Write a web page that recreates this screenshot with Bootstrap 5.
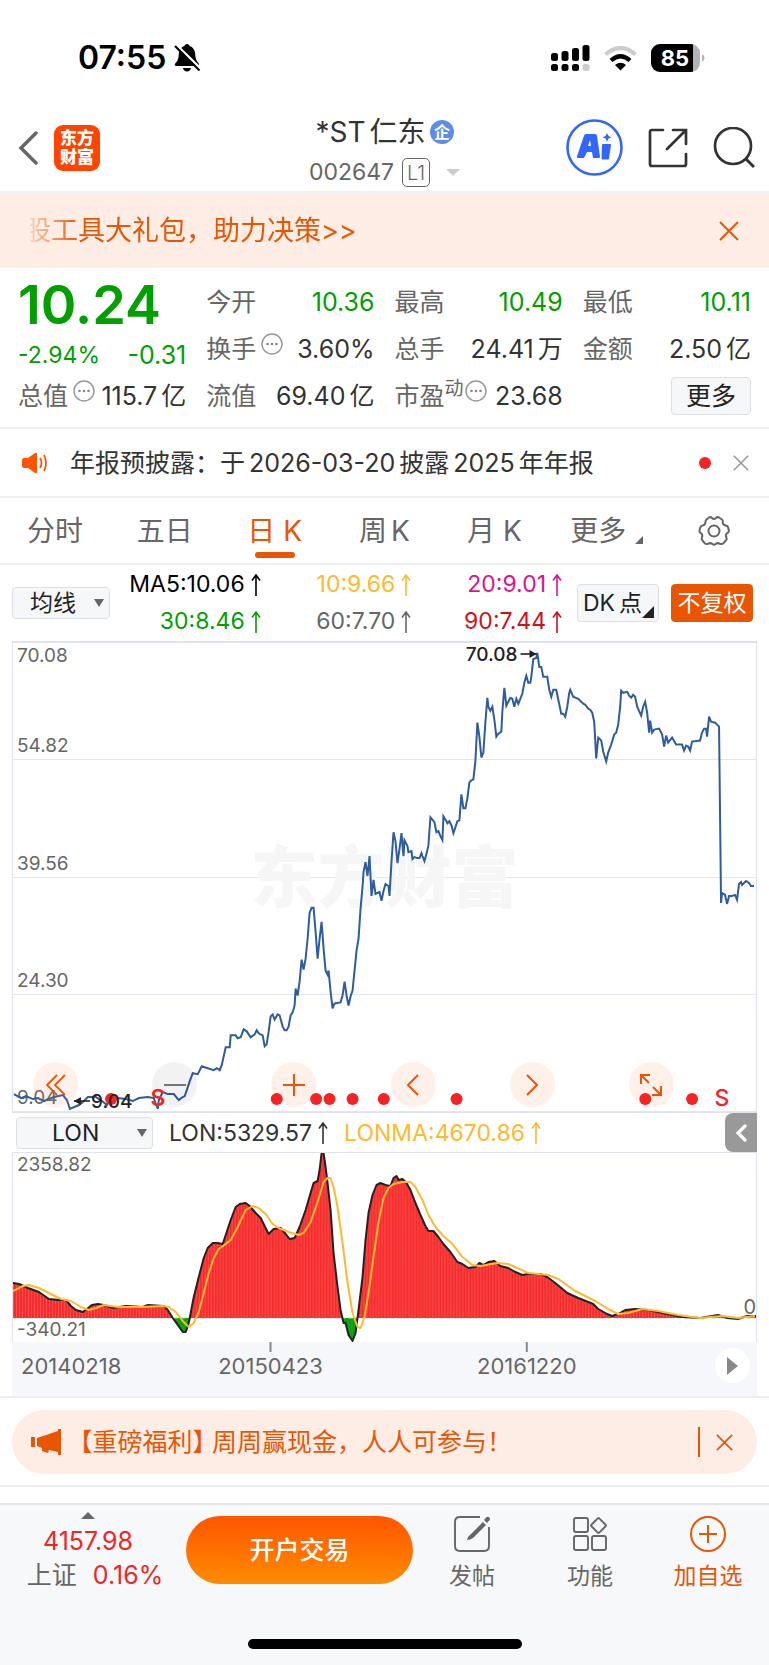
<!DOCTYPE html>
<html lang="zh-CN">
<head>
<meta charset="utf-8">
<meta name="viewport" content="width=device-width, initial-scale=1">
<title>*ST仁东 002647</title>
<link href="https://cdn.jsdelivr.net/npm/bootstrap@5.3.0/dist/css/bootstrap.min.css" rel="stylesheet">
<style>
:root{--brand:#ea5504;--up:#f52323;--down:#00a000;--ink:#333;--muted:#666;--rule:#eff0f3;--panel:#f7f8fa;--tint:#fdede4;--amber:#ffb92e}
body{font-family:Inter,"Noto Sans CJK SC",sans-serif;font-size:25px;line-height:32px;color:var(--ink);background:#fff}
svg{display:block;flex:none}
button,a{color:inherit;text-decoration:none}
.bare{border:0;background:none;padding:0;color:inherit;font:inherit}
.rule-b{border-bottom:2px solid var(--rule)}
.status{height:112px;padding:4px 64px 0 78px;color:#000}
.clock{font-size:32px;font-weight:600}
.signals{gap:14px}
.topbar{display:grid;grid-template-columns:1fr auto 1fr;height:81px;padding:0 14px}
.topbar .side{padding-bottom:8px}
.logo{width:46px;height:46px;border-radius:9px;background:#ff4400;color:#fff;font-size:17px;line-height:19px;font-weight:900}
.heading{padding-top:4px}
.stock{font-size:28px;line-height:32px;margin:0 0 8px;font-weight:400}
.code{font-size:23px;line-height:32px;color:var(--muted)}
.level{width:28px;height:29px;border:1px solid var(--muted);border-radius:5px;font-size:20px;line-height:28px;font-weight:300}
.caret{width:0;height:0;border:7px solid transparent;border-bottom-width:0;border-top-color:#ccc}
.promo{height:75px;background:var(--tint);color:var(--brand);font-size:27px;padding:0 30px 0 24px}
.ticker{white-space:nowrap;-webkit-mask-image:linear-gradient(90deg,transparent 6px,rgba(0,0,0,.2) 7px,#000 56px);mask-image:linear-gradient(90deg,transparent 6px,rgba(0,0,0,.2) 7px,#000 56px)}
.quote{display:grid;grid-template-columns:repeat(4,1fr);column-gap:20px;padding:10px 18px 8px}
.cell{display:flex;justify-content:space-between;align-items:center;height:47px;white-space:nowrap}
.cell dt{font-weight:400;color:var(--muted);display:flex;align-items:center}
.cell dd{margin:0}
.cell dt svg{margin:0 0 10px 5px}
.cell sup{font-size:19px;top:-7px}
.cell sup + svg{margin-left:1px!important}
.price{font-size:54px;line-height:54px;font-weight:600}
.change{height:40px;padding-top:5px}
.percent{font-size:23px}
.down{color:var(--down)}
.chip{border:1px solid #dcdfe5;border-radius:4px;background:#f6f7f9;color:#222;padding:0}
.chip-lg{width:80px;height:38px;line-height:36px}
.notice{height:69px;padding:0 20px 0 22px;gap:22px}
.tabs{display:grid;grid-template-columns:repeat(7,1fr);height:67px;color:var(--muted);font-size:28px}
.tabs button{position:relative}
.tabs .active{color:var(--brand)}
.tabs .active::after{content:"";position:absolute;left:50%;bottom:5px;width:40px;margin-left:-20px;height:6px;border-radius:3px;background:var(--brand)}
.corner{display:inline-block;width:0;height:0;border:4px solid;border-top-color:transparent;border-left-color:transparent}
.tabs .corner{position:absolute;right:16px;bottom:19px}
.tabs .with-corner{padding-right:12px}
.tools{height:76px;padding:0 17px 0 12px;font-size:22px}
.pick{position:relative}
.pick select{appearance:none;border:1px solid #dcdfe5;border-radius:4px;background:#f6f7f9;color:#222;height:32px;line-height:28px;font-size:23px;padding:0 0 0 17px}
.pick::after{content:"";position:absolute;right:6px;top:12px;border:5px solid transparent;border-bottom-width:0;border-top:8px solid var(--muted)}
.pick-ma select{width:98px}
.pick-sub select{width:137px;padding-left:35px}
.avgs{display:grid;grid-template-columns:repeat(3,1fr);width:452px;font-size:23px;line-height:37px;margin-right:15px}
.avgs span,.val{display:flex;align-items:center;justify-content:flex-end;gap:6px}
.dk{position:relative;width:82px;text-align:left;padding-left:5px;font-size:23px}
.dk .corner{position:absolute;right:4px;bottom:3px;border-width:6px}
.adj{background:var(--brand);border-color:var(--brand);color:#fff;width:82px;font-size:23px;margin-left:12px}
.frame{margin:0 12px;border:1px solid #dfe2e8;border-width:2px 1px 1px}
.plot{position:relative;height:472px}
.band{height:25%;border-bottom:1px solid #e3e6ee;padding-left:4px;display:flex;flex-direction:column;justify-content:flex-end;font-size:19px;line-height:26px;color:var(--muted)}
.band:first-child{justify-content:space-between}
.band:last-of-type{border-bottom:0}
.layer{position:absolute;inset:0;width:100%;height:100%}
.water{position:absolute;inset:0;display:flex;align-items:center;justify-content:center;font-size:67px;font-weight:900;color:#f6f6f6}
.pads{position:absolute;left:20px;right:82px;bottom:5px;display:flex;justify-content:space-between}
.pad{width:45px;height:45px;border-radius:50%;background:rgba(255,120,50,.1);color:var(--brand);display:flex;align-items:center;justify-content:center}
.pad-off{background:rgba(0,0,0,.05);color:#777}
.subbar{height:39px;margin:0 12px 0 16px;font-size:23px}
.fold{width:32px;height:39px;border-radius:8px 0 0 8px;background:#999}
.lon{position:relative;height:190px;border-width:1px 1px 0;font-size:19px;line-height:24px;color:var(--muted)}
.lon b{position:absolute;left:4px;font-weight:400}
.axis{position:relative;height:54px;margin:0 12px;background:#f6f7fa;font-size:22px}
.play{position:absolute;right:7px;top:6px;width:35px;height:35px;border-radius:50%;background:#fff;display:flex;align-items:center;justify-content:center}
.gift{height:64px;margin:12px 12px 11px;border-radius:32px;background:var(--tint);color:var(--brand);padding:0 24px 0 19px}
.gift a{padding-left:19px}
.half{font-feature-settings:"halt"}
.dock{background:var(--panel);border-top:2px solid #e2e4e8;height:162px;color:var(--muted);padding-right:2px}
.index{flex:0 0 186px;line-height:34px;padding-right:10px}
.index i{width:0;height:0;border:7px solid transparent;border-top-width:0;border-bottom-color:var(--muted);margin:7px 0 5px}
.market{margin-left:14px}
.up{color:var(--up)}
.open{flex:0 0 227px;height:68px;margin-top:11px;border-radius:34px;background:linear-gradient(#ff5500,#ff8c00);color:#fff;font-weight:500}
.act{flex:1;font-size:23px;display:flex;flex-direction:column;align-items:center;gap:8px;padding-top:11px}
.home{position:absolute;bottom:16px;left:50%;width:274px;height:10px;margin-left:-137px;border-radius:5px;background:#000}
</style>
</head>
<body>
<svg width="0" height="0" class="position-absolute" aria-hidden="true">
  <symbol id="more" viewBox="0 0 22 22"><circle cx="11" cy="11" r="10" fill="none" stroke="#999" stroke-width="1.5"/><g fill="#888"><circle cx="6.5" cy="11" r="1.3"/><circle cx="11" cy="11" r="1.3"/><circle cx="15.500" cy="11" r="1.3"/></g></symbol>
  <symbol id="rise" viewBox="0 0 10 22"><path d="M5 22V1M1 6.500 5 1l4 5.500" fill="none" stroke="currentColor" stroke-width="1.600"/></symbol>
  <symbol id="cross" viewBox="0 0 20 20"><path d="M1 1 19 19M19 1 1 19" fill="none" stroke="currentColor" stroke-width="2"/></symbol>
</svg>

<div class="status d-flex align-items-center justify-content-between">
  <div class="d-flex align-items-center gap-2">
    <span class="clock">07:55</span>
    <svg width="27" height="28" viewBox="0 0 27 28"><path d="M13 0c1.500 0 2.400 1 2.600 2 3.400 1 5.400 4 5.600 8 .2 5 1.500 7 3.500 9.500.8 1.200.3 2.500-1 2.500H2.500C.8 22 .3 20.700 1.200 19.500 3.500 17 4.600 15 4.800 10 5 6 7 3 10.400 2c.2-1 1.100-2 2.600-2zM9 24h8c-.3 2.300-2 3.500-4 3.500S9.300 26.300 9 24z"/><path d="M2 .500 27 25" stroke="#fff" stroke-width="2.500"/><path d="M1 2 25.500 26.500" stroke="#000" stroke-width="2.200"/></svg>
  </div>
  <div class="signals d-flex align-items-center">
    <svg width="39" height="28" viewBox="0 0 39 28"><rect y="9" width="7" height="8" rx="2.500"/><rect x="10.500" y="7" width="7" height="10" rx="2.500"/><rect x="21" y="4" width="7" height="13" rx="2.500"/><rect x="31.500" y="1" width="7" height="16" rx="2.500"/><rect y="20" width="7" height="7" rx="2.500"/><rect x="10.500" y="20" width="7" height="7" rx="2.500"/><rect x="21" y="20" width="7" height="7" rx="2.500"/><rect x="31.500" y="20" width="7" height="7" rx="2.500" fill="#ccc"/></svg>
    <svg width="33" height="25" viewBox="0 0 33 25"><g fill="none" stroke-width="4.200"><path d="M1.500 8.500Q16.500-4.500 31.500 8.500" stroke="#ccc"/><path d="M7 14.500Q16.500 6 26 14.500" stroke="#000"/></g><path d="M11 19Q16.500 14.500 22 19L16.500 24.500z"/></svg>
    <svg width="54" height="28" viewBox="0 0 54 28" font-weight="700" font-size="22"><defs><clipPath id="cell"><rect width="49" height="28" rx="9"/></clipPath></defs><g clip-path="url(#cell)"><rect width="49" height="28" fill="#b3b3b3"/><rect width="42" height="28"/></g><path d="M51 10q2.500 1.500 2.500 4t-2.500 4z" fill="#b3b3b3"/><text x="24" y="22" fill="#fff" text-anchor="middle">85</text></svg>
  </div>
</div>

<header class="topbar rule-b">
  <div class="side d-flex align-items-center ps-1">
    <button class="bare" aria-label="返回"><svg width="20" height="34" viewBox="0 0 20 34"><path d="M18 2 3 17l15 15" fill="none" stroke="#666" stroke-width="3.500" stroke-linecap="round"/></svg></button>
    <div class="logo ms-3 d-flex flex-column align-items-center justify-content-center"><span>东方</span><span>财富</span></div>
  </div>
  <div class="heading d-flex flex-column align-items-center">
    <h1 class="stock d-flex align-items-center">*ST<span class="ms-1">仁东</span>
      <svg class="ms-1" width="24" height="24" viewBox="0 0 24 24"><circle cx="12" cy="12" r="12" fill="#5f8ce8"/><text x="12" y="18" font-size="16" font-weight="700" fill="#fff" text-anchor="middle">企</text></svg></h1>
    <div class="code d-flex align-items-center">002647<span class="level ms-2 text-center">L1</span><span class="caret ms-3"></span></div>
  </div>
  <div class="side d-flex align-items-center justify-content-end">
    <button class="bare" aria-label="AI"><svg width="57" height="57" viewBox="0 0 57 57"><circle cx="28.500" cy="28.500" r="27" fill="none" stroke="#3366ff" stroke-width="2.600"/><path fill="#3366ff" fill-rule="evenodd" d="M20 15h9q2 0 2 2l3 21q0 1-1 1h-6l-1-6h-5l-3 6h-6q-1.500 0-1-1.500L18 16.500q.6-1.500 2-1.500zM24 21l-2 6h3zM37 25h7q1 0 1 1l-2 13.500q0 1-1 1h-5.500q-1 0-1-1L36 26q0-1 1-1zM41 14l1.500 3 3 1.200-3 1.300-1.500 3-1.500-3-3-1.300 3-1.200z"/></svg></button>
    <button class="bare ms-4" aria-label="分享"><svg width="42" height="42" viewBox="0 0 42 42"><path d="M16 3H5q-2 0-2 2v32q0 2 2 2h32q2 0 2-2V27M26 3h13v14M38 4 20 22" fill="none" stroke="#333" stroke-width="2.700" stroke-linecap="round"/></svg></button>
    <button class="bare ms-4" aria-label="搜索"><svg width="42" height="42" viewBox="0 0 42 42"><circle cx="20" cy="19" r="18" fill="none" stroke="#333" stroke-width="2.700"/><path d="m33 32 8 8" stroke="#333" stroke-width="3"/></svg></button>
  </div>
</header>

<section class="promo d-flex align-items-center justify-content-between">
  <div class="ticker">股工具大礼包，助力决策&gt;&gt;</div>
  <button class="bare" aria-label="关闭"><svg width="20" height="20"><use href="#cross"/></svg></button>
</section>

<section class="quote rule-b">
  <div>
    <div class="price down">10.24</div>
    <div class="change d-flex justify-content-between align-items-center down"><span class="percent">-2.94%</span><span>-0.31</span></div>
    <dl class="cell mb-0"><dt>总值<svg width="22" height="22"><use href="#more"/></svg></dt><dd>115.7<span class="ms-1">亿</span></dd></dl>
  </div>
  <dl class="mb-0">
    <div class="cell"><dt>今开</dt><dd class="down">10.36</dd></div>
    <div class="cell"><dt>换手<svg width="22" height="22"><use href="#more"/></svg></dt><dd>3.60%</dd></div>
    <div class="cell"><dt>流值</dt><dd>69.40<span class="ms-1">亿</span></dd></div>
  </dl>
  <dl class="mb-0">
    <div class="cell"><dt>最高</dt><dd class="down">10.49</dd></div>
    <div class="cell"><dt>总手</dt><dd>24.41<span class="ms-1">万</span></dd></div>
    <div class="cell"><dt>市盈<sup>动</sup><svg width="22" height="22"><use href="#more"/></svg></dt><dd>23.68</dd></div>
  </dl>
  <div>
    <dl class="mb-0">
      <div class="cell"><dt>最低</dt><dd class="down">10.11</dd></div>
      <div class="cell"><dt>金额</dt><dd>2.50<span class="ms-1">亿</span></dd></div>
    </dl>
    <div class="cell justify-content-end"><button class="chip chip-lg">更多</button></div>
  </div>
</section>

<section class="notice rule-b d-flex align-items-center">
  <svg width="26" height="22" viewBox="0 0 26 22"><path d="M0 8q0-2 2-2h4l7-5q2-1 2 1v18q0 2-2 1l-7-5H2q-2 0-2-2z" fill="#ff5500"/><path d="M18 6q3 5 0 10M22 3q4 8 0 16" fill="none" stroke="#ff5500" stroke-width="1.800"/></svg>
  <a href="#" class="flex-grow-1">年报预披露：于<span class="mx-1">2026-03-20</span>披露<span class="mx-1">2025</span>年年报</a>
  <svg width="12" height="12"><circle cx="6" cy="6" r="6" fill="#f52323"/></svg>
  <button class="bare" aria-label="关闭" style="color:#999"><svg width="16" height="16"><use href="#cross"/></svg></button>
</section>

<nav class="tabs rule-b">
  <button class="bare">分时</button><button class="bare">五日</button><button class="bare active">日<span class="ms-1 ps-1">K</span></button><button class="bare">周<span class="ms-1">K</span></button><button class="bare">月<span class="ms-1 ps-1">K</span></button><button class="bare with-corner">更多<span class="corner"></span></button>
  <button class="bare d-flex align-items-center justify-content-center" aria-label="设置"><svg width="32" height="32" viewBox="0 0 32 32" fill="none" stroke="#666" stroke-width="2"><circle cx="16" cy="16" r="5.500"/><path d="M11 2.500q2-1 3 .5 2 2 4 0 1-1.500 3-.5l3 2q1 1 .7 2.500 0 3 3 3.500 2 .3 2.500 2l.7 3.500q-.2 1.500-1.500 2-2.500 1.500-1 4.500.8 1.500-.3 2.700l-3 3.300q-1.500 1-3 .3-2.500-1.500-4.500.3-1.500 1.400-3.200 0-2-1.800-4.500-.3-1.500.7-3-.3l-2.700-3.300q-1-1.200-.3-2.700 1.300-3-1.200-4.500-1.300-.6-1.300-2l.8-3.500q.6-1.600 2.300-2 3-.5 3-3.500-.2-1.500 1-2.500z"/></svg></button>
</nav>

<section class="tools d-flex align-items-center justify-content-between">
  <label class="pick pick-ma"><select aria-label="主图指标"><option>均线</option></select></label>
  <div class="d-flex align-items-center">
    <div class="avgs">
      <span class="text-black">MA5:10.06<svg width="10" height="22"><use href="#rise"/></svg></span>
      <span style="color:#ffb92e">10:9.66<svg width="10" height="22"><use href="#rise"/></svg></span>
      <span style="color:#e0118c">20:9.01<svg width="10" height="22"><use href="#rise"/></svg></span>
      <span class="down">30:8.46<svg width="10" height="22"><use href="#rise"/></svg></span>
      <span style="color:#666">60:7.70<svg width="10" height="22"><use href="#rise"/></svg></span>
      <span style="color:#d0101c">90:7.44<svg width="10" height="22"><use href="#rise"/></svg></span>
    </div>
    <button class="chip chip-lg dk">DK<span class="ms-1">点</span><span class="corner"></span></button>
    <button class="chip chip-lg adj">不复权</button>
  </div>
</section>

<section class="frame plot">
  <div class="band"><span>70.08</span><span>54.82</span></div>
  <div class="band"><span>39.56</span></div>
  <div class="band"><span>24.30</span></div>
  <div class="band"><span>9.04</span></div>
  <div class="water">东方财富</div>
  <svg class="layer" viewBox="12 643 744 471" preserveAspectRatio="none"><polyline fill="none" stroke="#2f5c9c" stroke-width="2" vector-effect="non-scaling-stroke" points="13,1096 20,1100 25,1098 32,1101 37,1100 43,1103 53,1099 62,1097 66,1102 69,1111 78,1107 82,1104 87,1099 95,1099 100,1102 106,1107 110,1100 117,1100 125,1101 132,1103 138,1100 147,1099 153,1100 157,1111 158,1102 162,1094 167,1096 173,1096 178,1102 182,1099 184,1098 187,1089 189,1083 192,1075 197,1076 201,1068 207,1070 213,1072 216,1070 219,1072 221,1067 225,1049 229,1049 230,1037 235,1037 237,1040 240,1039 243,1031 246,1033 250,1039 254,1036 256,1032 258,1035 262,1037 264,1048 266,1046 268,1033 270,1018 272,1016 274,1021 277,1016 279,1017 282,1028 284,1032 286,1032 288,1028 290,1017 292,1014 294,1007 295,990 297,997 299,983 301,961 303,971 305,960 307,940 309,914 311,909 313,909 315,933 317,960 319,940 321,923 323,950 325,972 327,976 328,972 330,993 332,1010 334,1005 340,1004 342,997 344,983 346,997 348,1007 350,998 352,992 354,972 356,952 358,940 360,910 362,888 363,873 365,863 367,877 369,857 371,897 373,881 375,895 379,893 381,902 383,892 385,885 388,887 389,897 391,863 393,833 395,842 397,864 399,850 401,834 403,857 404,841 407,847 408,853 411,852 412,860 414,858 417,859 419,859 421,854 422,857 424,862 426,855 428,846 430,818 434,823 436,833 438,832 440,837 442,841 443,817 446,822 447,824 449,822 451,826 453,834 455,828 457,822 459,821 461,795 463,809 465,809 467,799 469,783 471,781 473,780 475,762 477,723 479,737 481,758 483,753 485,723 487,698 488,707 490,711 492,707 494,720 496,737 498,734 501,732 502,712 504,688 506,706 508,702 510,698 512,699 514,707 516,699 518,704 520,699 522,694 524,683 526,676 528,683 530,683 531,677 533,659 536,658 537,653 539,667 541,667 543,677 547,677 549,690 551,697 553,690 556,690 557,695 561,714 563,714 565,717 567,707 569,693 570,690 573,697 578,699 583,704 585,705 588,709 590,710 592,713 594,722 596,759 598,738 601,741 603,752 606,762 608,753 611,745 614,735 616,733 618,725 620,707 621,691 623,693 627,692 629,696 631,698 633,695 635,697 637,707 641,716 643,707 645,702 647,713 649,733 650,721 652,733 654,730 659,729 662,735 664,747 666,736 668,743 672,738 676,745 682,745 684,751 686,746 688,747 690,751 692,742 700,741 702,733 704,729 706,729 707,737 709,717 711,722 715,723 719,727 721,904 722,894 725,896 727,905 729,897 732,897 735,896 737,901 739,885 741,883 742,886 746,882 749,884 751,887 754,887"/></svg>
  <div class="pads">
    <button class="bare pad" aria-label="最早"><svg width="20" height="22" viewBox="0 0 20 22"><path d="M11 1 1 11l10 10M19 1 9 11l10 10" fill="none" stroke="currentColor" stroke-width="1.800"/></svg></button>
    <button class="bare pad pad-off" aria-label="缩小"><svg width="22" height="22" viewBox="0 0 22 22"><path d="M0 11h22" stroke="currentColor" stroke-width="2"/></svg></button>
    <button class="bare pad" aria-label="放大"><svg width="22" height="22" viewBox="0 0 22 22"><path d="M0 11h22M11 0v22" stroke="currentColor" stroke-width="2"/></svg></button>
    <button class="bare pad" aria-label="向左"><svg width="14" height="22" viewBox="0 0 14 22"><path d="M12 1 2 11l10 10" fill="none" stroke="currentColor" stroke-width="2"/></svg></button>
    <button class="bare pad" aria-label="向右"><svg width="14" height="22" viewBox="0 0 14 22"><path d="m2 1 10 10L2 21" fill="none" stroke="currentColor" stroke-width="2"/></svg></button>
    <button class="bare pad" aria-label="全屏"><svg width="22" height="22" viewBox="0 0 22 22"><path d="M10 1H1v9M1 1l8 8M12 21h9v-9M21 21l-8-8" fill="none" stroke="currentColor" stroke-width="2"/></svg></button>
  </div>
  <svg class="layer pe-none">
    <g fill="#f52323"><circle cx="13.2%" cy="456" r="6"/><circle cx="35.5%" cy="456" r="6"/><circle cx="40.8%" cy="456" r="6"/><circle cx="42.6%" cy="456" r="6"/><circle cx="45.7%" cy="456" r="6"/><circle cx="49.9%" cy="456" r="6"/><circle cx="59.7%" cy="456" r="6"/><circle cx="85.1%" cy="456" r="6"/><circle cx="91.4%" cy="456" r="6"/></g>
    <g font-size="23" text-anchor="middle" fill="#f52323"><text x="19.5%" y="463" font-weight="600">S</text><text x="95.4%" y="463" font-weight="500">S</text></g>
    <g font-size="19" font-weight="500" fill="#222"><text x="10.500%" y="465">9.04</text><text x="67.900%" y="18" text-anchor="end">70.08</text></g>
    <svg x="8.200%" y="452" width="16" height="12" overflow="visible"><path d="M0 6h16" stroke="#222" stroke-width="1.600"/><path d="m0 6 7-4v8z" fill="#222"/></svg>
    <svg x="68.300%" y="5" width="16" height="12" overflow="visible"><path d="M0 6h16" stroke="#222" stroke-width="1.600"/><path d="m16 6-7-4v8z" fill="#222"/></svg>
  </svg>
</section>

<section class="subbar d-flex align-items-center">
  <label class="pick pick-sub"><select aria-label="副图指标"><option>LON</option></select></label>
  <span class="val ms-3">LON:5329.57<svg width="10" height="22"><use href="#rise"/></svg></span>
  <span class="val ms-3" style="color:#ffb92e">LONMA:4670.86<svg width="10" height="22"><use href="#rise"/></svg></span>
  <button class="bare fold ms-auto d-flex align-items-center justify-content-center" aria-label="收起"><svg width="11" height="18" viewBox="0 0 11 18"><path d="M9 2 2 9l7 7" fill="none" stroke="#fff" stroke-width="3.200" stroke-linecap="round"/></svg></button>
</section>

<section class="frame lon">
  <svg class="layer" viewBox="12 1153 744 189" preserveAspectRatio="none">
    <defs>
      <pattern id="bars" width="3" height="8" patternUnits="userSpaceOnUse"><rect width="3" height="8" fill="#f92a2a"/><rect width="1" height="8" fill="#f55050"/></pattern>
      <clipPath id="above"><rect x="12" y="1150" width="745" height="168"/></clipPath>
      <path id="curve" d="M0 1283H12L18 1284 27 1288 38 1292 48 1299 58 1300 65 1300 70 1306 75 1310 82 1312 86 1309 91 1305 97 1304 103 1305 112 1308 125 1306 142 1307 147 1305 163 1306 167 1310 172 1318 177 1325 182 1332 185 1332 188 1323 193 1297 198 1277 203 1258 207 1248 212 1243 217 1243 222 1244 225 1235 230 1220 235 1207 239 1204 245 1203 249 1206 255 1213 260 1218 265 1228 268 1234 273 1229 280 1228 285 1234 289 1239 294 1238 299 1227 305 1210 310 1193 313 1183 317 1181 319 1170 321 1153 323 1153 325 1167 327 1183 330 1210 333 1253 337 1287 340 1310 343 1323 345 1323 348 1335 352 1341 355 1333 358 1310 362 1277 365 1240 368 1213 372 1195 376 1185 380 1183 385 1185 390 1186 393 1178 396 1176 398 1180 402 1179 406 1183 410 1190 415 1203 420 1215 425 1226 428 1231 433 1231 438 1237 443 1244 450 1252 457 1262 462 1264 468 1268 475 1267 479 1263 483 1265 488 1262 494 1261 500 1266 508 1268 515 1272 522 1275 528 1274 540 1274 547 1277 555 1283 567 1293 578 1298 593 1304 598 1309 607 1314 612 1316 618 1314 625 1310 635 1309 648 1310 662 1313 682 1317 700 1318 718 1315 727 1318 738 1319 747 1316 755 1316H780V1400H0z"/>
    </defs>
    <rect x="12" y="1318" width="744" height="26" fill="#0fa30f"/>
    <use href="#curve" fill="#fff"/>
    <path d="M12 1318H756" stroke="#ccc" stroke-dasharray="4 3"/>
    <use href="#curve" fill="url(#bars)" clip-path="url(#above)"/>
    <use href="#curve" fill="none" stroke="#222" stroke-width="2" stroke-linejoin="round"/>
    <polyline fill="none" stroke="#ffb92e" stroke-width="2" stroke-linejoin="round" points="12,1291 22,1286 28,1285 38,1288 50,1294 60,1299 70,1301 80,1307 88,1310 95,1308 103,1305 117,1307 140,1307 162,1306 168,1307 175,1312 182,1321 188,1327 193,1323 198,1312 203,1293 208,1273 213,1258 218,1249 225,1244 230,1240 237,1227 245,1210 252,1206 258,1208 265,1214 272,1224 278,1228 288,1232 298,1235 303,1233 310,1222 317,1202 323,1182 327,1178 330,1178 333,1187 337,1207 342,1243 347,1283 352,1313 357,1327 360,1328 364,1317 368,1293 373,1257 378,1222 383,1198 388,1188 393,1184 402,1182 410,1182 415,1187 422,1200 428,1215 435,1227 443,1236 452,1244 462,1257 472,1265 480,1266 497,1263 508,1264 528,1273 548,1275 558,1279 575,1291 595,1301 608,1309 618,1314 628,1313 642,1309 658,1311 678,1315 700,1318 722,1316 738,1318 755,1316"/>
  </svg>
  <b class="top-0">2358.82</b><b class="bottom-0">-340.21</b>
  <svg class="layer"><text x="100%" y="161" text-anchor="end" font-size="20" fill="#666">0</text></svg>
</section>
<div class="axis">
  <svg class="layer" fill="#666"><g stroke="#888" stroke-width="2"><line x1="34.700%" x2="34.700%" y1="0" y2="10"/><line x1="69.100%" x2="69.100%" y1="0" y2="10"/></g><text x="9" y="32">20140218</text><g text-anchor="middle"><text x="34.700%" y="32">20150423</text><text x="69.100%" y="32">20161220</text></g></svg>
  <button class="bare play" aria-label="播放"><svg width="11" height="18" viewBox="0 0 11 18"><path d="M0 0v18L11 9z" fill="#888"/></svg></button>
</div>

<section class="border-top border-bottom border-2 overflow-hidden" style="--bs-border-color:#eceef2">
  <div class="gift d-flex align-items-center">
    <svg width="30" height="26" viewBox="0 0 30 26"><path d="M0 8h4v10H0zM6 9l21-7V0h3v26h-3v-3l-9-2-1 3-6-2v-3l-5-2z" fill="#ea5504"/></svg>
    <a href="#" class="flex-grow-1"><span class="half">【</span>重磅福利<span class="half">】</span> 周周赢现金，人人可参与！</a>
    <svg width="2" height="30" class="me-3"><path d="M1 0v30" stroke="#ea5504" stroke-width="2"/></svg>
    <button class="bare" aria-label="关闭"><svg width="17" height="17"><use href="#cross"/></svg></button>
  </div>
</section>

<footer class="dock position-relative d-flex align-items-start mt-3">
  <a href="#" class="index d-flex flex-column align-items-center"><i></i><span class="up">4157.98</span><span class="market">上证<span class="up ms-3">0.16%</span></span></a>
  <button class="bare open">开户交易</button>
  <a href="#" class="act"><svg width="36" height="36" viewBox="0 0 36 36"><path d="M26 1H6Q1 1 1 6v24q0 5 5 5h24q5 0 5-5V11" fill="none" stroke="#666" stroke-width="1.900"/><path d="M13 24q0-3 3-5L29 6l3 3-13 13q-3 2-6 2zM30 4l2-2.500q2-1.500 3.300 0t0 3L33 7z" fill="#666"/></svg>发帖</a>
  <a href="#" class="act"><svg width="36" height="36" viewBox="0 0 36 36" fill="none" stroke="#666" stroke-width="1.900"><rect x="2" y="2" width="14" height="14" rx="2"/><rect x="2" y="20" width="14" height="14" rx="2"/><rect x="20" y="20" width="14" height="14" rx="2"/><rect x="21" y="4" width="11" height="11" rx="1" transform="rotate(45 26.500 9.500)"/></svg>功能</a>
  <a href="#" class="act" style="color:#ea5504"><svg width="38" height="36" viewBox="0 0 38 36" fill="none" stroke="#ea5504" stroke-width="2"><circle cx="19" cy="18" r="17"/><path d="M10 18h18M19 9v18"/></svg>加自选</a>
  <div class="home"></div>
</footer>
<script src="https://cdn.jsdelivr.net/npm/bootstrap@5.3.0/dist/js/bootstrap.bundle.min.js"></script>
</body>
</html>
